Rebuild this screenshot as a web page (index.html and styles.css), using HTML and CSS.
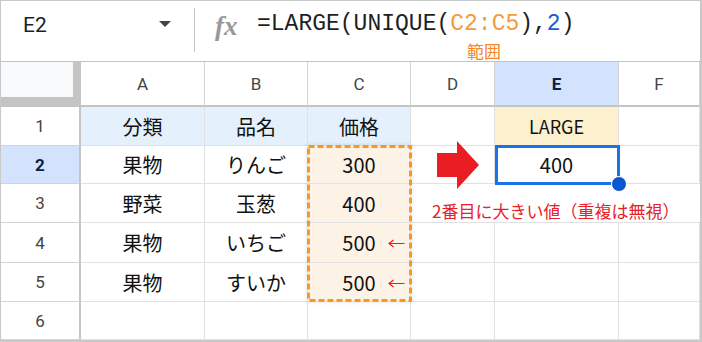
FILE: index.html
```html
<!DOCTYPE html>
<html lang="ja">
<head>
    <meta charset="UTF-8">
    <title>LARGE UNIQUE</title>
    <link rel="stylesheet" href="styles.css">
</head>
<body>
    <div class="sheet">
        <div class="formula-bar">
            <div class="name-box">
                <span class="cell-ref">E2</span>
                <span class="caret"></span>
            </div>
            <div class="divider"></div>
            <div class="fx">fx</div>
            <div class="formula">
                <div class="formula-text">=LARGE(UNIQUE(<span class="ref">C2:C5</span>),<span class="num">2</span>)</div>
                <div class="formula-note">範囲</div>
            </div>
        </div>

        <div class="grid">
            <div class="corner"></div>
            <div class="col-head">A</div>
            <div class="col-head">B</div>
            <div class="col-head">C</div>
            <div class="col-head">D</div>
            <div class="col-head active">E</div>
            <div class="col-head">F</div>

            <div class="row-head">1</div>
            <div class="cell label">分類</div>
            <div class="cell label">品名</div>
            <div class="cell label">価格</div>
            <div class="cell"></div>
            <div class="cell result-label">LARGE</div>
            <div class="cell"></div>

            <div class="row-head active">2</div>
            <div class="cell">果物</div>
            <div class="cell">りんご</div>
            <div class="cell price"><span class="value">300</span></div>
            <div class="cell arrow-cell">
                <svg class="big-arrow" width="42" height="48" viewBox="0 0 42 48">
                    <path d="M0 12 H20 V0 L42 24 L20 48 V36 H0 Z" fill="#ea1c24"/>
                </svg>
            </div>
            <div class="cell">400</div>
            <div class="cell"></div>

            <div class="row-head">3</div>
            <div class="cell">野菜</div>
            <div class="cell">玉葱</div>
            <div class="cell price"><span class="value">400</span></div>
            <div class="cell note">2番目に大きい値（重複は無視）</div>

            <div class="row-head">4</div>
            <div class="cell">果物</div>
            <div class="cell">いちご</div>
            <div class="cell price">
                <span class="value">500</span>
                <svg class="mark" width="17" height="9" viewBox="0 0 17 9">
                    <path d="M1 4.5 H16.5 M5.5 1 L1 4.5 L5.5 8" fill="none" stroke="#ee1c25" stroke-width="1.2"/>
                </svg>
            </div>
            <div class="cell"></div>
            <div class="cell"></div>
            <div class="cell"></div>

            <div class="row-head">5</div>
            <div class="cell">果物</div>
            <div class="cell">すいか</div>
            <div class="cell price">
                <span class="value">500</span>
                <svg class="mark" width="17" height="9" viewBox="0 0 17 9">
                    <path d="M1 4.5 H16.5 M5.5 1 L1 4.5 L5.5 8" fill="none" stroke="#ee1c25" stroke-width="1.2"/>
                </svg>
            </div>
            <div class="cell"></div>
            <div class="cell"></div>
            <div class="cell"></div>

            <div class="row-head">6</div>
            <div class="cell"></div>
            <div class="cell"></div>
            <div class="cell"></div>
            <div class="cell"></div>
            <div class="cell"></div>
            <div class="cell"></div>

            <!-- copied range C2:C5 -->
            <div class="range">
                <svg width="105" height="157" viewBox="0 0 105 157">
                    <rect x="1.5" y="1.5" width="102" height="154" fill="none" stroke="#f7991c" stroke-width="3" stroke-dasharray="6 3"/>
                </svg>
            </div>
            <!-- active cell E2 -->
            <div class="selection"><span class="handle"></span></div>
        </div>
    </div>
</body>
</html>
```

FILE: styles.css
```css
body {
    margin: 0;
    background: #fff;
}
.sheet {
    width: 702px;
    height: 342px;
    box-sizing: border-box;
    border: 1px solid #c8c8c8;
    border-right-width: 2px;
    border-bottom-width: 2px;
    font-family: "Noto Sans CJK JP", sans-serif;
    color: #111;
    overflow: hidden;
}

/* formula bar */
.formula-bar {
    height: 61px;
    box-sizing: border-box;
    border-bottom: 1px solid #c4c4c4;
    display: flex;
    align-items: flex-start;
}
.name-box {
    width: 193px;
    height: 47px;
    box-sizing: border-box;
    padding: 0 23px 0 22px;
    display: flex;
    align-items: center;
    justify-content: space-between;
}
.cell-ref {
    font-family: Roboto, sans-serif;
    font-size: 21px;
    color: #1f1f1f;
}
.caret {
    width: 0;
    height: 0;
    border-left: 6px solid transparent;
    border-right: 6px solid transparent;
    border-top: 6px solid #444;
    margin-top: -2px;
}
.divider {
    width: 1px;
    height: 44px;
    margin-top: 7px;
    background: #c4c4c4;
}
.fx {
    width: 62px;
    box-sizing: border-box;
    padding: 10px 0 0 20px;
    font-family: "Liberation Serif", serif;
    font-style: italic;
    font-weight: bold;
    font-size: 27px;
    line-height: 30px;
    color: #999;
}
.formula {
    padding-top: 9px;
}
.formula-text {
    font-family: "Liberation Mono", monospace;
    font-size: 23px;
    line-height: 28px;
    color: #1f1f1f;
}
.formula-text .ref {
    color: #f59b3d;
}
.formula-text .num {
    color: #1c5bd6;
}
.formula-note {
    margin-top: 4px;
    padding-left: 210px;
    font-size: 17px;
    line-height: 17px;
    color: #f5862b;
}

/* grid */
.grid {
    position: relative;
    display: grid;
    grid-template-columns: 80px 124px 103px 103px 84px 124px 81px;
    grid-template-rows: 45px 39px 38px 39px 40px 39px 38px;
}
.corner {
    background: #f8f9fa;
    border-right: 8px solid #c4c4c4;
    border-bottom: 10px solid #c4c4c4;
}
.col-head {
    display: flex;
    align-items: center;
    justify-content: center;
    border-right: 1px solid #d3d3d3;
    border-bottom: 2px solid #c4c4c4;
    font-family: Roboto, sans-serif;
    font-size: 17px;
    color: #444;
}
.row-head {
    display: flex;
    align-items: center;
    justify-content: center;
    border-right: 2px solid #c4c4c4;
    border-bottom: 1px solid #d3d3d3;
    font-family: Roboto, sans-serif;
    font-size: 17px;
    color: #444;
}
.col-head.active,
.row-head.active {
    background: #d3e3fd;
    color: #0b1f47;
    font-weight: bold;
}
.cell {
    display: flex;
    align-items: center;
    justify-content: center;
    border-right: 1px solid #e1e1e1;
    border-bottom: 1px solid #e1e1e1;
    font-size: 20px;
}
.cell.label {
    background: #e4f0fc;
}
.cell.result-label {
    background: #fdf0cf;
    font-size: 18px;
}
.cell.price {
    display: grid;
    grid-template-columns: 1fr auto 1fr;
    align-items: center;
    background: #fcf3e6;
}
.price .value {
    grid-column: 2;
}
.price .mark {
    grid-column: 3;
    justify-self: end;
    margin: 2px 5px 0 0;
}
.arrow-cell {
    justify-content: flex-start;
    padding-left: 26px;
}
.big-arrow {
    position: relative;
    z-index: 1;
    flex-shrink: 0;
}
.cell.note {
    grid-column: span 3;
    justify-content: flex-start;
    padding: 14px 0 0 21px;
    border-right: none;
    font-size: 17px;
    color: #e8202a;
}

/* overlays */
.range {
    position: absolute;
    grid-column: 4 / 5;
    grid-row: 3 / 7;
    inset: -1px -1px 0 -1px;
    box-shadow: 0 0 4px rgba(0, 0, 0, 0.12);
}
.range svg {
    display: block;
}
.selection {
    position: absolute;
    grid-column: 6 / 7;
    grid-row: 3 / 4;
    inset: -1px -1px -1px 0;
    border: 3px solid #1a73e8;
}
.handle {
    position: absolute;
    right: -10px;
    bottom: -10px;
    width: 14px;
    height: 14px;
    border-radius: 50%;
    background: #0b57d0;
    border: 1px solid #fff;
}
```
